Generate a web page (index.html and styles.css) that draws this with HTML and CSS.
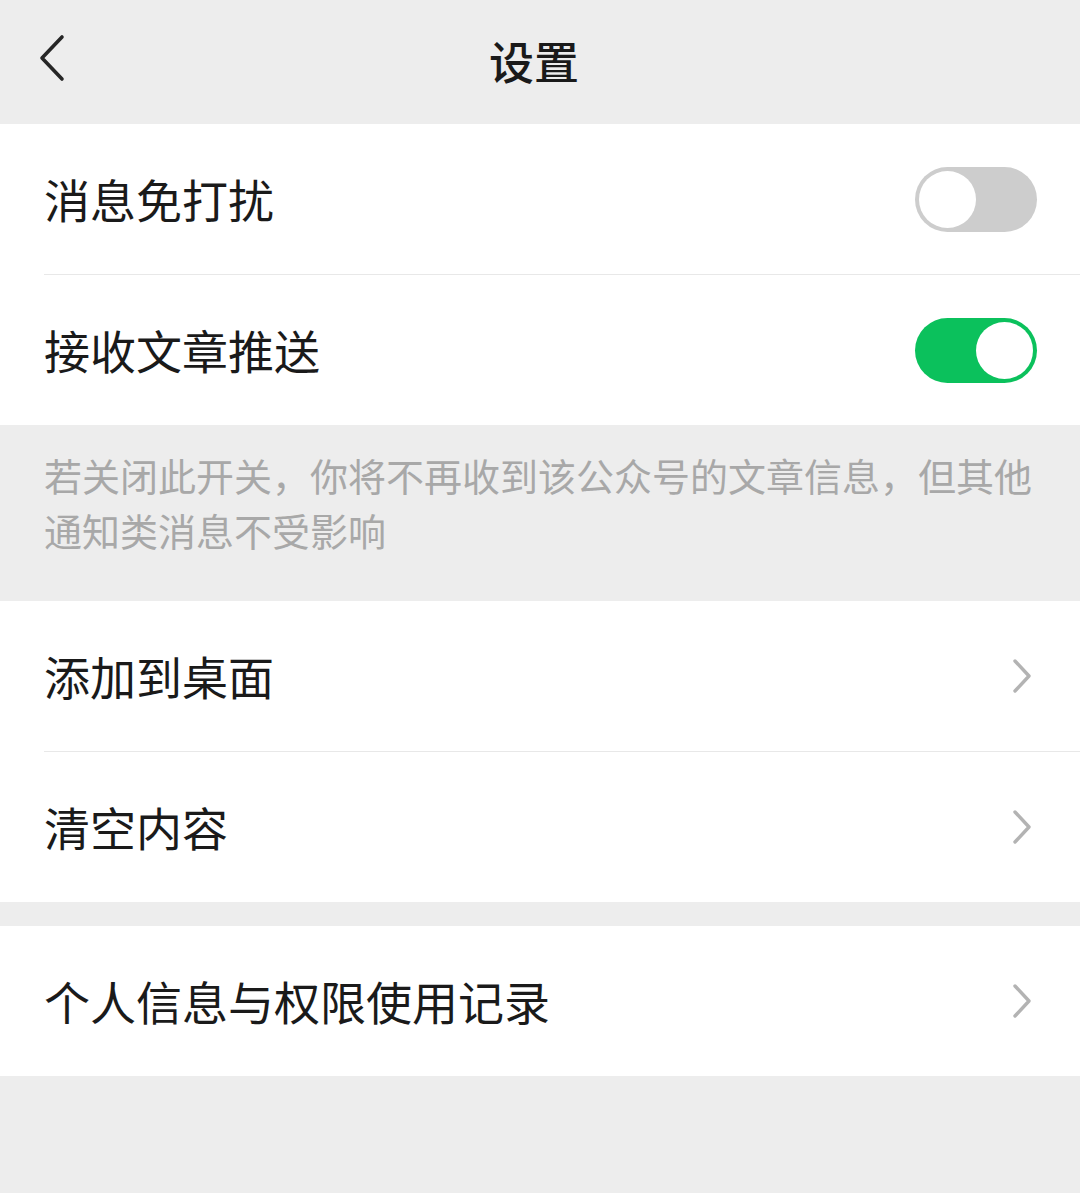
FILE: index.html
```html
<!DOCTYPE html>
<html lang="zh-CN">

<head>
    <meta charset="UTF-8">
    <meta name="viewport" content="width=device-width, initial-scale=1.0">
    <title>设置</title>
    <link rel="stylesheet" href="styles.css">
</head>

<body>

    <div id="page">
        <div class="topbar">
            <div class="back">
                <svg width="28" height="48" viewBox="0 0 28 48">
                    <path d="M24 3 L4 24 L24 45" fill="none" stroke="#262626" stroke-width="3.6" stroke-linecap="round" stroke-linejoin="round" />
                </svg>
            </div>
            <h1 class="title">设置</h1>
            <div></div>
        </div>

        <div class="group">
            <div class="cell">
                <span class="label">消息免打扰</span>
                <div class="switch"><div class="knob"></div></div>
            </div>
            <div class="cell">
                <span class="label">接收文章推送</span>
                <div class="switch on"><div class="knob"></div></div>
            </div>
        </div>

        <p class="hint">若关闭此开关，你将不再收到该公众号的文章信息，但其他通知类消息不受影响</p>

        <div class="group">
            <div class="cell link">
                <span class="label">添加到桌面</span>
                <svg class="arrow" width="20" height="36" viewBox="0 0 20 36">
                    <path d="M3 3 L17 18 L3 33" fill="none" stroke="#b3b3b3" stroke-width="3.4" stroke-linecap="round" stroke-linejoin="round" />
                </svg>
            </div>
            <div class="cell link">
                <span class="label">清空内容</span>
                <svg class="arrow" width="20" height="36" viewBox="0 0 20 36">
                    <path d="M3 3 L17 18 L3 33" fill="none" stroke="#b3b3b3" stroke-width="3.4" stroke-linecap="round" stroke-linejoin="round" />
                </svg>
            </div>
        </div>

        <div class="group spaced">
            <div class="cell link">
                <span class="label">个人信息与权限使用记录</span>
                <svg class="arrow" width="20" height="36" viewBox="0 0 20 36">
                    <path d="M3 3 L17 18 L3 33" fill="none" stroke="#b3b3b3" stroke-width="3.4" stroke-linecap="round" stroke-linejoin="round" />
                </svg>
            </div>
        </div>
    </div>

</body>

</html>
```

FILE: styles.css
```css
* {
    margin: 0;
    padding: 0;
    outline: none;
    box-sizing: border-box;
}

html,
body {
    width: 100%;
    height: 100%;
}

body {
    background-color: #ededed;
    font-family: "Noto Sans CJK SC", "Noto Sans", sans-serif;
    color: #1a1a1a;
}

#page {
    width: 100%;
    min-height: 100%;
    background-color: #ededed;
}

.topbar {
    height: 124px;
    display: grid;
    grid-template-columns: 1fr auto 1fr;
    align-items: center;
}

.back {
    padding-left: 38px;
    padding-bottom: 8px;
    display: flex;
    align-items: center;
}

.title {
    font-size: 45px;
    font-weight: 500;
    margin-right: 12px;
    margin-bottom: 4px;
}

.group {
    background-color: #ffffff;
}

.group.spaced {
    margin-top: 24px;
}

.cell {
    position: relative;
    height: 150px;
    padding-left: 44px;
    padding-right: 43px;
    display: flex;
    justify-content: space-between;
    align-items: center;
}

.cell + .cell {
    height: 151px;
    border-top: 1px solid #e8e8e8;
    margin-left: 44px;
    padding-left: 0;
}

.cell.link {
    padding-right: 48px;
}

.label {
    font-size: 46px;
    line-height: 1;
    margin-top: -2px;
}

.switch {
    width: 122px;
    height: 65px;
    border-radius: 33px;
    background-color: #cdcdcd;
    padding: 4px;
    display: flex;
    justify-content: flex-start;
}

.switch.on {
    background-color: #0bc15c;
    justify-content: flex-end;
}

.knob {
    width: 57px;
    height: 57px;
    border-radius: 50%;
    background-color: #ffffff;
}

.hint {
    padding: 22px 40px 44px 44px;
    font-size: 38px;
    line-height: 55px;
    color: #a8a8a8;
}
```
